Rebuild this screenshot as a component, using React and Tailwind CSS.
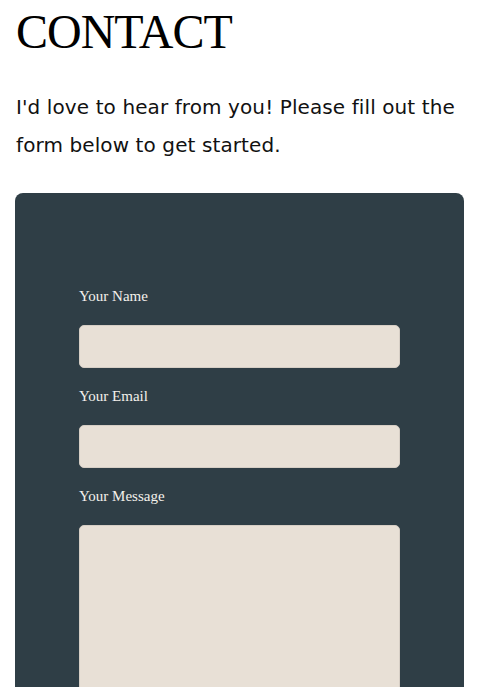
import { useState } from "react"

function Field({ label, type = "text", multiline = false, value, onChange }) {
  return (
    <label className="block">
      <span className="block text-[15px] leading-[20px] text-[#f4f1ec] mb-[19px]">{label}</span>
      {multiline ? (
        <textarea
          value={value}
          onChange={onChange}
          className="block w-full h-[220px] rounded-[5px] border border-[#d6cec5] bg-[#e8e0d6] resize-none outline-none"
        />
      ) : (
        <input
          type={type}
          value={value}
          onChange={onChange}
          className="block w-full h-[43px] rounded-[5px] border border-[#d6cec5] bg-[#e8e0d6] outline-none mb-[18px]"
        />
      )}
    </label>
  )
}

export default function App() {
  const [form, setForm] = useState({ name: "", email: "", message: "" })
  const set = (k) => (e) => setForm({ ...form, [k]: e.target.value })

  return (
    <div className="min-h-screen bg-white px-4 pb-10">
      <h1 className="pt-[8px] text-[48px] leading-none tracking-[-1px] text-black font-['Liberation_Serif',serif]">
        CONTACT
      </h1>
      <p className="mt-[33px] text-[20px] leading-[37.5px] tracking-[0.1px] text-[#111] font-['DejaVu_Sans',sans-serif]">
        I'd love to hear from you! Please fill out the form below to get started.
      </p>

      <div className="mt-[29px] -ml-px rounded-lg bg-[#2f3e46] px-16 pt-[93px] pb-16 font-['Liberation_Serif',serif]">
        <Field label="Your Name" value={form.name} onChange={set("name")} />
        <Field label="Your Email" type="email" value={form.email} onChange={set("email")} />
        <Field label="Your Message" multiline value={form.message} onChange={set("message")} />
      </div>
    </div>
  )
}
